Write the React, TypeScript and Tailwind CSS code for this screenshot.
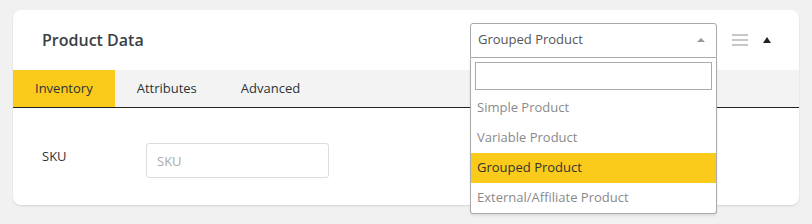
import { useState } from "react";

const productTypes = [
  "Simple Product",
  "Variable Product",
  "Grouped Product",
  "External/Affiliate Product",
];

const tabs = ["Inventory", "Attributes", "Advanced"];

export default function App() {
  const [activeTab, setActiveTab] = useState("Inventory");
  const [selected, setSelected] = useState("Grouped Product");

  return (
    <div
      className="min-h-[224px] w-full bg-[#f1f1f1] px-[13px] pt-[10px]"
      style={{ fontFamily: '"Open Sans", "Noto Sans", sans-serif' }}
    >
      <div className="w-[786px] rounded-[8px] bg-white shadow-[0_1px_2px_rgba(0,0,0,0.12)]">
        <div className="flex h-[60px] items-center pl-[29px] pr-[28px]">
          <h2 className="text-[16px] font-semibold text-[#3a3f45]">
            Product Data
          </h2>

          <div className="relative ml-auto">
            <div className="flex h-[35px] w-[247px] items-center justify-between rounded-t-[3px] border border-[#aaa] bg-white pl-[7px] pr-[11px] text-[13px] text-[#555]">
              <span>{selected}</span>
              <span className="h-0 w-0 border-x-[4px] border-b-[4px] border-x-transparent border-b-[#999]" />
            </div>
            <div className="absolute left-0 top-[35px] z-10 w-[247px] rounded-b-[3px] border border-t-0 border-[#aaa] bg-white shadow-[0_2px_3px_rgba(0,0,0,0.08)]">
              <div className="px-[4px] pt-[4px] pb-[3px]">
                <input className="h-[28px] w-full border border-[#aaa] outline-none" />
              </div>
              <ul className="text-[13px]">
                {productTypes.map((type) => (
                  <li
                    key={type}
                    onClick={() => setSelected(type)}
                    className={
                      type === selected
                        ? "flex h-[30px] items-center bg-[#facb1a] px-[6px] text-[#333]"
                        : "flex h-[30px] items-center px-[6px] text-[#8a8a8a]"
                    }
                  >
                    {type}
                  </li>
                ))}
              </ul>
            </div>
          </div>

          <div className="ml-[15px] flex w-[16px] flex-col gap-[3px]">
            <span className="h-[2px] w-full bg-[#c8c8c8]" />
            <span className="h-[2px] w-full bg-[#c8c8c8]" />
            <span className="h-[2px] w-full bg-[#c8c8c8]" />
          </div>
          <span className="ml-[15px] h-0 w-0 border-x-[4px] border-b-[6px] border-x-transparent border-b-[#222]" />
        </div>

        <div className="flex h-[38px] border-b border-[#222] bg-[#f3f3f3]">
          {tabs.map((tab) => (
            <button
              key={tab}
              onClick={() => setActiveTab(tab)}
              className={
                tab === activeTab
                  ? "bg-[#facb1a] px-[22px] text-[13px] font-medium text-[#2c3338]"
                  : "px-[22px] text-[13px] font-medium text-[#2c3338]"
              }
            >
              {tab}
            </button>
          ))}
        </div>

        <div className="flex items-start pb-[27px] pl-[29px] pt-[35px]">
          <label className="mt-[4px] w-[104px] text-[13px] text-[#333]">
            SKU
          </label>
          <input
            placeholder="SKU"
            className="h-[35px] w-[183px] rounded-[3px] border border-[#ddd] px-[10px] text-[13px] outline-none placeholder:text-[#aaa]"
          />
        </div>
      </div>
    </div>
  );
}
